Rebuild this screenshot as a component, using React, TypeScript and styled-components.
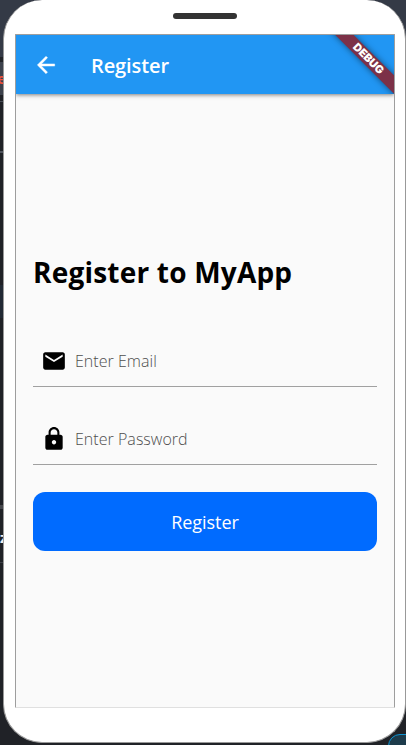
import React from 'react';
import styled, { createGlobalStyle } from 'styled-components';

const GlobalStyle = createGlobalStyle`
  * { box-sizing: border-box; }
  html, body { margin: 0; padding: 0; }
  body { overflow: hidden; font-family: "Open Sans", "Noto Sans", sans-serif; }
`;

const Desktop = styled.div`
  position: relative;
  width: 406px;
  height: 745px;
  overflow: hidden;
  padding-left: 3px;
  background: linear-gradient(
    #343a46 0 57px, #202227 57px 62px, #3c414c 62px 95px, #202227 95px 101px,
    #4a4e57 101px 102px, #202227 102px 151px, #50545d 151px 153px, #202227 153px 285px,
    #222a35 285px 318px, #202227 318px 505px, #45474c 505px 509px, #202227 509px 562px,
    #3d4047 562px 563px, #202227 563px
  );
`;

const EditorGlyph = styled.span<{ $top: number; $left: number; $color: string; $size: number }>`
  position: absolute;
  top: ${p => p.$top}px;
  left: ${p => p.$left}px;
  font-size: ${p => p.$size}px;
  line-height: 20px;
  font-weight: 700;
  color: ${p => p.$color};
`;

const EditorChip = styled.div`
  position: absolute;
  left: 388px;
  top: 734px;
  width: 40px;
  height: 30px;
  border: 1px solid #0d92d0;
  border-radius: 12px;
  background: #1d3b4b;
`;

const Phone = styled.div`
  position: relative;
  width: 403px;
  height: 743px;
  border: 1px solid #999;
  border-top: 0;
  border-radius: 39px;
  background: #fff;
  padding: 13px 11px 0;
  display: flex;
  flex-direction: column;
  align-items: stretch;
`;

const Speaker = styled.div`
  align-self: center;
  width: 64px;
  height: 6px;
  border-radius: 3px;
  background: #333;
  margin: 0 0 15px 1px;
`;

const Screen = styled.main`
  width: 380px;
  height: 674px;
  border: 1px solid #9e9e9e;
  border-bottom-color: #e0e0e0;
  border-radius: 1px;
  background: #fafafa;
  overflow: hidden;
`;

const AppBar = styled.header`
  position: relative;
  height: 59px;
  background: #2196f3;
  box-shadow: 0 1px 4px rgba(0, 0, 0, 0.5);
  display: flex;
  align-items: center;
  padding-left: 17px;
`;

const BackIcon = styled.svg`
  width: 26px;
  height: 26px;
  fill: #fff;
  stroke: #fff;
  stroke-width: 0.4;
`;

const AppBarTitle = styled.h1`
  margin: 3px 0 0 32px;
  font-size: 20px;
  line-height: 28px;
  font-weight: 600;
  color: #fff;
  letter-spacing: -0.1px;
`;

const RibbonClip = styled.div`
  position: absolute;
  top: 0;
  right: 0;
  width: 80px;
  height: 59px;
  overflow: hidden;
`;

const Ribbon = styled.div`
  position: absolute;
  left: -5px;
  top: 18px;
  width: 120px;
  height: 13px;
  transform: rotate(45deg);
  background: #7c3148;
  box-shadow: 0 0 6px rgba(0, 0, 0, 0.5);
  color: #fff;
  font: 900 11px/13px Inter, sans-serif;
  text-align: center;
  padding-right: 2px;
`;

const Content = styled.form`
  padding: 155px 17px 0;
  display: flex;
  flex-direction: column;
`;

const Heading = styled.h2`
  margin: 0;
  height: 46px;
  font-size: 28px;
  line-height: 46px;
  font-weight: 700;
  color: #000;
  white-space: nowrap;
  letter-spacing: 0.2px;
`;

const Field = styled.label<{ $gap: number }>`
  margin-top: ${p => p.$gap}px;
  height: 52px;
  border-bottom: 1px solid #a0a0a0;
  display: flex;
  align-items: center;
  padding-left: 8px;
  gap: 8px;
`;

const FieldIcon = styled.svg`
  width: 26px;
  height: 26px;
  flex: none;
  fill: #000;
`;

const Placeholder = styled.span`
  font-size: 16px;
  line-height: 24px;
  font-weight: 300;
  color: #4e4e4e;
  letter-spacing: 0.03px;
`;

const SubmitButton = styled.button`
  margin-top: 27px;
  height: 59px;
  border: 0;
  border-radius: 12px;
  padding: 0;
  background: #006bff;
  color: #fff;
  font: 400 18px/26px "Open Sans", "Noto Sans", sans-serif;
  letter-spacing: -0.05px;
`;

export default function App() {
  return (
    <>
      <GlobalStyle />
      <Desktop>
        <EditorGlyph $top={68} $left={-3} $color="#f4513b" $size={15}>e</EditorGlyph>
        <EditorGlyph $top={527} $left={0} $color="#eee" $size={15}>z</EditorGlyph>
        <EditorChip />
        <Phone>
          <Speaker />
          <Screen>
            <AppBar>
              <BackIcon viewBox="0 0 24 24">
                <path d="M20 11H7.83l5.59-5.59L12 4l-8 8 8 8 1.41-1.41L7.83 13H20z" />
              </BackIcon>
              <AppBarTitle>Register</AppBarTitle>
              <RibbonClip>
                <Ribbon>DEBUG</Ribbon>
              </RibbonClip>
            </AppBar>
            <Content>
              <Heading>Register to MyApp</Heading>
              <Field $gap={40}>
                <FieldIcon viewBox="0 0 24 24">
                  <path d="M20 4H4c-1.1 0-2 .9-2 2v12c0 1.1.9 2 2 2h16c1.1 0 2-.9 2-2V6c0-1.1-.9-2-2-2zm0 4l-8 5-8-5V6l8 5 8-5z" />
                </FieldIcon>
                <Placeholder>Enter Email</Placeholder>
              </Field>
              <Field $gap={26}>
                <FieldIcon viewBox="0 0 24 24">
                  <path d="M18 8h-1V6c0-2.76-2.24-5-5-5S7 3.24 7 6v2H6c-1.1 0-2 .9-2 2v10c0 1.1.9 2 2 2h12c1.1 0 2-.9 2-2V10c0-1.1-.9-2-2-2zm-6 9c-1.1 0-2-.9-2-2s.9-2 2-2 2 .9 2 2-.9 2-2 2zm3.1-9H8.9V6c0-1.71 1.39-3.1 3.1-3.1s3.1 1.39 3.1 3.1z" />
                </FieldIcon>
                <Placeholder>Enter Password</Placeholder>
              </Field>
              <SubmitButton type="button">Register</SubmitButton>
            </Content>
          </Screen>
        </Phone>
      </Desktop>
    </>
  );
}
